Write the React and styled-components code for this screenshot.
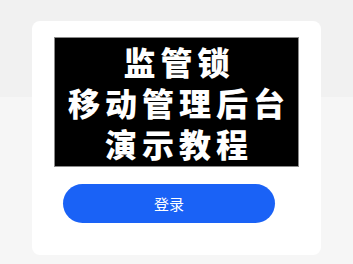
import React from 'react';
import styled, { createGlobalStyle } from 'styled-components';

const GlobalStyle = createGlobalStyle`
  html, body {
    margin: 0;
    padding: 0;
  }
  body {
    background: linear-gradient(#f1f1f1 0, #f1f1f1 97px, #f6f6f6 97px);
    font-family: "Noto Sans CJK SC", "Noto Sans", sans-serif;
  }
`;

const Page = styled.div`
  width: 353px;
  height: 264px;
  box-sizing: border-box;
  padding: 21px 32px 0 32px;
`;

const Card = styled.div`
  width: 289px;
  height: 234px;
  box-sizing: border-box;
  background: #ffffff;
  border-radius: 8px;
  padding: 16px 0 0 22px;
  display: flex;
  flex-direction: column;
`;

const Poster = styled.div`
  width: 245px;
  height: 130px;
  box-sizing: border-box;
  background: #000000;
  border: 1px solid #8a8a8a;
  display: flex;
  flex-direction: column;
  align-items: center;
  justify-content: center;
  padding-top: 1px;
`;

const PosterLine = styled.div`
  color: #ffffff;
  font-family: "Noto Sans CJK SC", sans-serif;
  font-weight: 900;
  font-size: 32px;
  line-height: 41px;
  letter-spacing: 5px;
  margin-right: -5px;
  white-space: nowrap;
`;

const LoginButton = styled.button`
  margin: 17px 0 0 9px;
  width: 212px;
  height: 39px;
  border: none;
  border-radius: 20px;
  background: #1a62f6;
  color: #ffffff;
  font-family: "Noto Sans CJK SC", sans-serif;
  font-size: 15px;
  display: flex;
  align-items: center;
  justify-content: center;
  padding: 0;
  cursor: pointer;
`;

const App = () => {
  return (
    <>
      <GlobalStyle />
      <Page>
        <Card>
          <Poster>
            <PosterLine>监管锁</PosterLine>
            <PosterLine>移动管理后台</PosterLine>
            <PosterLine>演示教程</PosterLine>
          </Poster>
          <LoginButton>登录</LoginButton>
        </Card>
      </Page>
    </>
  );
};

export default App;
